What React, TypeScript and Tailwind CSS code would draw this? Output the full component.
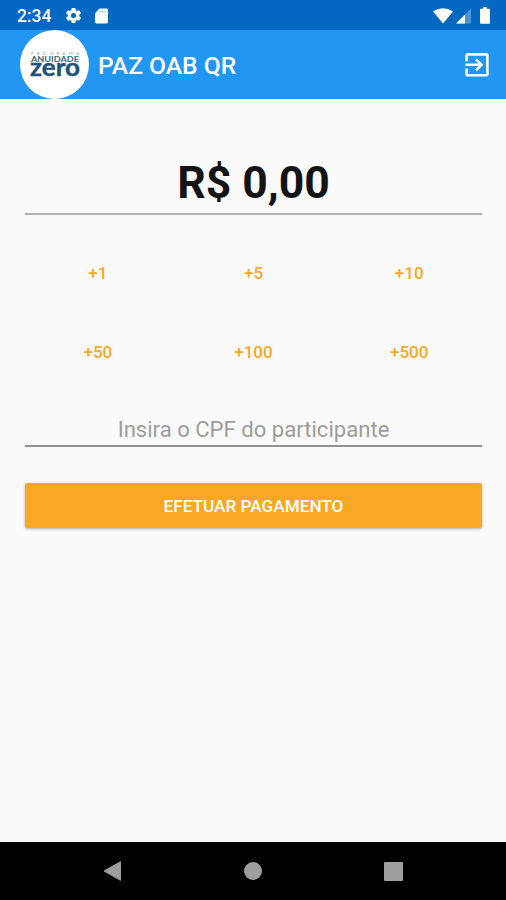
import React from "react";

const GearIcon = () => (
  <svg className="h-[19px] w-[19px]" viewBox="0 0 24 24" fill="currentColor">
    <path d="M19.14 12.94c.04-.3.06-.61.06-.94 0-.32-.02-.64-.07-.94l2.03-1.58a.49.49 0 0 0 .12-.61l-1.92-3.32a.49.49 0 0 0-.59-.22l-2.39.96c-.5-.38-1.03-.7-1.62-.94l-.36-2.54a.48.48 0 0 0-.48-.41h-3.84a.47.47 0 0 0-.47.41l-.36 2.54c-.59.24-1.13.57-1.62.94l-2.39-.96a.48.48 0 0 0-.59.22L2.74 8.87a.47.47 0 0 0 .12.61l2.03 1.58c-.05.3-.09.63-.09.94s.02.64.07.94l-2.03 1.58a.49.49 0 0 0-.12.61l1.92 3.32c.12.22.37.29.59.22l2.39-.96c.5.38 1.03.7 1.62.94l.36 2.54c.05.24.24.41.48.41h3.84c.24 0 .44-.17.47-.41l.36-2.54c.59-.24 1.13-.56 1.62-.94l2.39.96c.22.08.47 0 .59-.22l1.92-3.32a.47.47 0 0 0-.12-.61l-2.01-1.58zM12 15.2A3.2 3.2 0 1 1 12 8.8a3.2 3.2 0 0 1 0 6.4z" />
  </svg>
);

const SdCardIcon = () => (
  <svg className="h-4 w-[13px]" viewBox="0 0 13 16">
    <path d="M4.5 0.5H11.6Q13 .5 13 1.9V14.1Q13 15.5 11.6 15.5H1.4Q0 15.5 0 14.1V5.3Z" fill="#fff" />
    <path d="M5 2.7V4.5M7.6 2.7V4.5M10.2 2.7V4.5" stroke="#8dbae5" strokeWidth="1.2" />
  </svg>
);

const WifiIcon = () => (
  <svg className="h-4 w-5" viewBox="0 0 20 16">
    <path d="M0 3.6Q10-3.2 20 3.6L10 15.6Z" fill="#fff" />
  </svg>
);

const SignalIcon = () => (
  <svg className="h-4 w-4" viewBox="0 0 16 16">
    <path d="M0 15.5L15 .5V15.5Z" fill="#4e93d5" />
    <path d="M0 15.5L9 6.5V15.5Z" fill="#fff" />
  </svg>
);

const BatteryIcon = () => (
  <svg className="h-[17px] w-[10px]" viewBox="0 0 10 17">
    <path d="M3 0H7V1.8H9Q10 1.8 10 2.8V15.8Q10 16.8 9 16.8H1Q0 16.8 0 15.8V2.8Q0 1.8 1 1.8H3Z" fill="#fff" />
  </svg>
);

const ExitIcon = () => (
  <svg className="h-6 w-6" viewBox="0 0 24 24" fill="none" stroke="#fff" strokeWidth="2.6">
    <path d="M1.6 8.2V2.7Q1.6 1.4 2.9 1.4H21.1Q22.4 1.4 22.4 2.7V20.9Q22.4 22.2 21.1 22.2H2.9Q1.6 22.2 1.6 20.9V15.6" />
    <path d="M.5 11.8H16M11 6.3L16.5 11.8L11 17.3" />
  </svg>
);

const Logo = () => (
  <div className="flex h-[69px] w-[69px] flex-col items-center rounded-full bg-white pt-[20px]">
    <svg className="h-[36px] w-[52px]" viewBox="0 0 52 36" fontFamily="Lato, sans-serif">
      <text x="2" y="5" fontSize="4" fill="#8d9aa5" textLength="48">PROGRAMA</text>
      <text x="2" y="12.2" fontSize="8" fontWeight="700" fill="#3c6583" textLength="48" lengthAdjust="spacingAndGlyphs">ANUIDADE</text>
      <text x="1" y="26.2" fontSize="24" fontWeight="700" fill="#1f527b" stroke="#1f527b" strokeWidth="0.4" textLength="50" lengthAdjust="spacingAndGlyphs">zero</text>
    </svg>
  </div>
);

const amounts = ["+1", "+5", "+10", "+50", "+100", "+500"];

export default function App() {
  return (
    <div className="flex h-[900px] w-[506px] flex-col overflow-hidden bg-[#fafafa] font-[Roboto,sans-serif]">
      <div className="flex h-[30px] shrink-0 items-center bg-[#0268c1] pl-[17px] pr-4 pt-px text-white">
        <span className="w-[47px] pt-[3px] text-[17.5px] font-medium leading-none">2:34</span>
        <GearIcon />
        <div className="ml-3 flex"><SdCardIcon /></div>
        <div className="ml-auto flex items-center">
          <WifiIcon />
          <div className="ml-[3px] mr-2"><SignalIcon /></div>
          <BatteryIcon />
        </div>
      </div>
      <header className="flex h-[69px] shrink-0 items-center bg-[#2196f3] pl-5 pr-[17px]">
        <Logo />
        <h1 className="ml-[9px] mt-[3px] whitespace-nowrap text-[24.6px] font-medium leading-none text-white">PAZ OAB QR</h1>
        <button className="ml-auto"><ExitIcon /></button>
      </header>
      <main className="flex flex-1 flex-col pl-[25px] pr-6">
        <div className="flex h-[116px] items-end justify-center border-b-2 border-[#b1b1b1] pb-2">
          <span className="text-[44.5px] font-bold leading-[44px] text-[#141416]">R$ 0,00</span>
        </div>
        <div className="-mx-[5px] mb-px mt-[19px] grid grid-cols-3 text-[17px] font-medium text-[#f9a825]">
          {amounts.map((amount) => (
            <button key={amount} className="h-[79px]">{amount}</button>
          ))}
        </div>
        <div className="flex h-[54px] items-end border-b-2 border-[#929292]">
          <input
            className="w-full bg-transparent pb-[3px] text-center text-[22.1px] leading-[26px] outline-none placeholder:text-[#9d9d9d]"
            placeholder="Insira o CPF do participante"
          />
        </div>
        <button className="mt-9 h-[45px] rounded-[2px] bg-[#f9a825] pt-[2px] text-[17.2px] font-medium text-white shadow-[0_1px_3px_rgba(0,0,0,0.3)]">
          EFETUAR PAGAMENTO
        </button>
      </main>
      <nav className="flex h-[58px] shrink-0 items-center justify-between bg-black pl-[103px] pr-[103px]">
        <svg className="h-5 w-[19px]" viewBox="0 0 19 20"><path d="M1 10L17.5 .7V19.3Z" fill="#9e9e9e" stroke="#9e9e9e" strokeLinejoin="round" /></svg>
        <div className="h-[18px] w-[18px] rounded-full bg-[#9e9e9e]" />
        <div className="h-[19px] w-[19px] rounded-[1px] bg-[#9e9e9e]" />
      </nav>
    </div>
  );
}
